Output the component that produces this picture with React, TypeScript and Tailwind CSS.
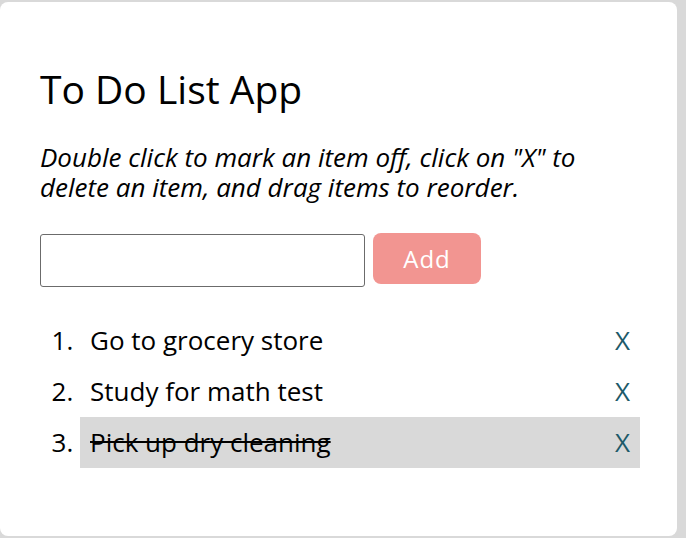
import React, { useState } from 'react';

type Todo = { id: number; text: string; done: boolean };

const initial: Todo[] = [
  { id: 1, text: 'Go to grocery store', done: false },
  { id: 2, text: 'Study for math test', done: false },
  { id: 3, text: 'Pick up dry cleaning', done: true },
];

const App = () => {
  const [todos, setTodos] = useState<Todo[]>(initial);
  const [value, setValue] = useState('');

  const handleSubmit = (e: React.FormEvent<HTMLFormElement>) => {
    e.preventDefault();
    if (value.trim()) {
      setTodos([...todos, { id: Date.now(), text: value.trim(), done: false }]);
      setValue('');
    }
  };

  const toggle = (id: number) =>
    setTodos(todos.map(t => (t.id === id ? { ...t, done: !t.done } : t)));

  const remove = (id: number) => setTodos(todos.filter(t => t.id !== id));

  return (
    <div className="min-h-screen bg-[#d9d9d9] pt-[2px] pr-[9px] pb-[2px] font-['Open_Sans',sans-serif] text-black">
      <div className="h-[534px] rounded-[8px] bg-white pl-[40px] pr-[37px] pt-[67px]">
        <h1 className="text-[39px] leading-[40px]">To Do List App</h1>
        <p className="mt-[33px] w-[570px] text-[26px] italic leading-[30px]">
          Double click to mark an item off, click on "X" to delete an item, and drag items to reorder.
        </p>
        <form onSubmit={handleSubmit} className="mt-[32px] flex items-start gap-[8px]">
          <input
            type="text"
            value={value}
            onChange={e => setValue(e.target.value)}
            className="h-[53px] w-[325px] rounded-[3px] border-[1.5px] border-[#6b6b6b] px-2 text-[22px] outline-none"
          />
          <button className="-mt-px h-[51px] w-[108px] rounded-[8px] bg-[#f29591] text-[24px] tracking-[1px] text-white">
            Add
          </button>
        </form>
        <ol className="mt-[28px] list-decimal pl-[40px] text-[26px]">
          {todos.map(t => (
            <li
              key={t.id}
              onDoubleClick={() => toggle(t.id)}
              className={`h-[51px] pl-[10px] pr-[10px] marker:text-black ${t.done ? 'bg-[#d9d9d9]' : ''}`}
            >
              <div className="flex h-full items-center justify-between">
                <span className={t.done ? 'line-through' : ''}>{t.text}</span>
                <button onClick={() => remove(t.id)} className="text-[#1d5a69]">
                  X
                </button>
              </div>
            </li>
          ))}
        </ol>
      </div>
    </div>
  );
};

export default App;
